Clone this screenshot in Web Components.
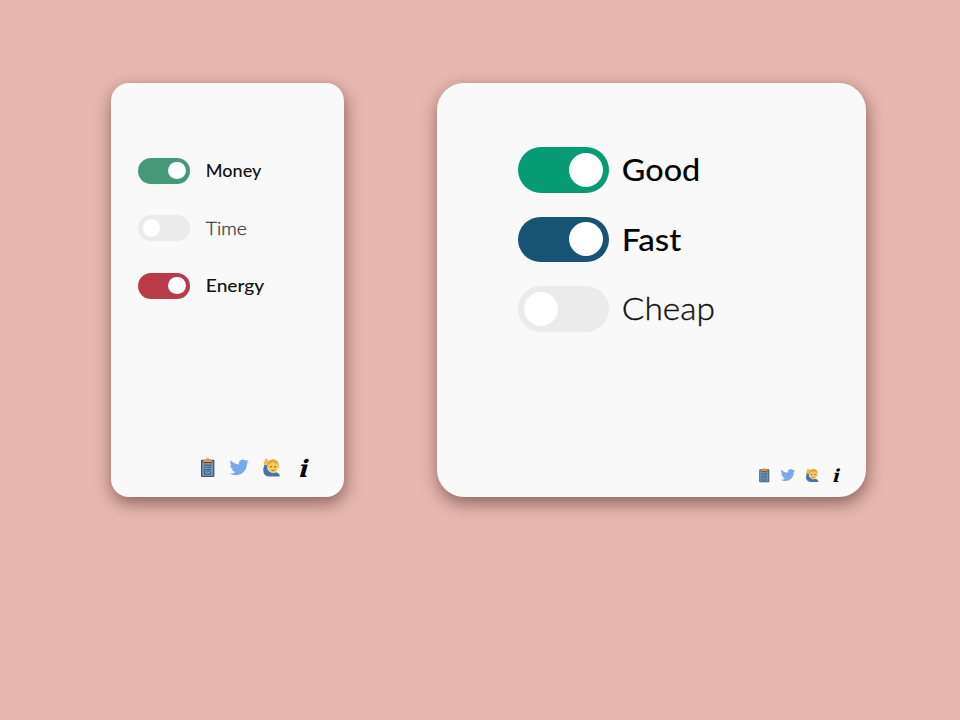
<!DOCTYPE html>
<html lang="en"><head><meta charset="utf-8"><title>Pick two</title>
<style>
body{margin:0;width:960px;height:720px;overflow:hidden;background:#e7b8b0;font-family:Lato,"Open Sans",sans-serif}
</style></head><body>
<trade-board></trade-board>
<script>
class ToggleOption extends HTMLElement{
 connectedCallback(){
  const root=this.attachShadow({mode:'open'}),on=this.hasAttribute('on'),ink=this.getAttribute('ink')||'#111';
  root.innerHTML=`<style>
  :host{display:flex;align-items:center;gap:var(--gap);height:var(--h)}
  .track{box-sizing:border-box;flex:none;width:var(--w);height:var(--h);border-radius:99px;background:${this.getAttribute('color')||'#ebebeb'};display:flex;align-items:center;justify-content:${on?'flex-end':'flex-start'};padding:0 var(--pad)}
  .knob{width:var(--knob);height:var(--knob);border-radius:50%;background:#fff}
  svg{display:block;overflow:visible;width:110px;height:var(--h)}
  text{font-size:var(--size);font-weight:${on?500:300};fill:${ink};stroke:${ink};stroke-width:${on?0:.35}px}
  </style><div class="track"><div class="knob"></div></div><svg><text x="-.2" y="${this.getAttribute('base')}" textLength="${this.getAttribute('len')}" lengthAdjust="spacingAndGlyphs">${this.textContent}</text></svg>`;
 }
}
class IconLinks extends HTMLElement{
 connectedCallback(){
  this.attachShadow({mode:'open'}).innerHTML=`<style>
  :host{display:flex;gap:var(--icon-gap)}
  svg{display:block;width:var(--icon);height:var(--icon);overflow:visible}
  text{font:italic bold 24px "DejaVu Serif",serif}
  </style>
  <svg viewBox="0 0 20 20"><rect x="3" y="1.8" width="13.4" height="17.2" rx="1" fill="#46535f"/><rect x="4.2" y="3.2" width="11" height="14.8" fill="#7097b8"/><path d="M5.4 4.4V3q0-1.3 1.7-1.3Q7.4.2 9.7.2t2.6 1.5Q14 1.7 14 3v1.4z" fill="#e5933d"/><path d="M5.5 4.5h8.4" stroke="#594b40"/><path d="M6 7.2h7.6M6 9.3h2.2m1.2 0h4M6.6 11.6v4.7h6.2v-2M6.6 11.6h5.8M8.5 13.8H10l3-2.5" fill="none" stroke="#3b566e" stroke-width=".9"/></svg>
  <svg viewBox="0 0 24 24"><path transform="translate(-.6 -.3) scale(.97)" fill="#7ba8e8" d="M23.95 4.57a10 10 0 01-2.82.77 4.96 4.96 0 002.16-2.72c-.95.55-2 .96-3.13 1.18a4.92 4.92 0 00-8.38 4.48C7.69 8.09 4.07 6.13 1.64 3.16a4.82 4.82 0 00-.67 2.48c0 1.71.87 3.21 2.19 4.1a4.9 4.9 0 01-2.23-.62v.06a4.92 4.92 0 003.95 4.83 5 5 0 01-2.21.08 4.94 4.94 0 004.6 3.42A9.87 9.87 0 010 19.54a13.99 13.99 0 007.56 2.21c9.05 0 14-7.5 14-13.98l-.02-.64a9.94 9.94 0 002.41-2.56z"/></svg>
  <svg viewBox="0 0 20 20"><path d="M2.4 6.5Q.6 11 1.6 14.8 3 18.5 7 18.6h10.8q.2-4.2-5.2-4.4Q6.8 14.6 5.5 11l.1-4z" fill="#4672b4"/><path d="M2 7 1.6 3.8q.3-.8 1 0L3 1.1q.6-.8 1 .2l.8-.6q.8.1.6 1.3.9-.3 1 .6.5 2.2-.8 5z" fill="#f4bd4b"/><path d="M5.7 9Q4.8 1.6 11 1.4q6.4.1 5.5 7.6z" fill="#d99a35"/><circle cx="5.9" cy="9" r="1.1" fill="#f3bb48"/><circle cx="16.3" cy="9" r="1.1" fill="#f3bb48"/><ellipse cx="11.1" cy="9" rx="5" ry="6.2" fill="#f8cb5a"/><path d="M6.2 6q3.2-.2 4.8-1.9Q12.6 6 16 6l-1-3.1-3.1-1.5-4.2 1z" fill="#e1a83b"/><circle cx="9" cy="8.8" r=".75" fill="#5b4123"/><circle cx="13.2" cy="8.8" r=".75" fill="#5b4123"/><path d="M9.4 12.2q1.8.9 3.4 0" fill="none" stroke="#9d6430" stroke-width=".9"/></svg>
  <svg viewBox="0 0 20 20"><text x="5.1" y="18.5" transform="translate(1.3 0) skewX(-4)" textLength="9.6" lengthAdjust="spacingAndGlyphs">i</text></svg>`;
 }
}
class OptionCard extends HTMLElement{
 connectedCallback(){
  this.attachShadow({mode:'open'}).innerHTML=`<style>
  :host{box-sizing:border-box;display:flex;flex-direction:column;justify-content:space-between;height:414.5px;background:#f9f9f9;box-shadow:1px 6px 17px rgba(50,15,10,.52)}
  .options{display:flex;flex-direction:column;gap:var(--row-gap)}
  .links{align-self:flex-end}
  </style><div class="options"><slot></slot></div><div class="links"><slot name="links"></slot></div>`;
 }
}
class TradeBoard extends HTMLElement{
 connectedCallback(){
  this.attachShadow({mode:'open'}).innerHTML=`<style>
  :host{display:flex;align-items:flex-start;gap:93.5px;padding:82.5px 0 0 111px}
  .narrow{width:232.5px;border-radius:18px;padding:75px 30px 19px 27px;--w:52px;--h:26px;--pad:4.5px;--knob:17.5px;--gap:16px;--size:18px;--row-gap:31.5px;--icon:20px;--icon-gap:12px}
  .wide{width:429px;border-radius:27px;padding:64.7px 22.5px 14.5px 81px;--w:91px;--h:45.5px;--pad:6px;--knob:34px;--gap:13px;--size:31.2px;--row-gap:24px;--icon:15px;--icon-gap:9px}
  </style>
  <option-card class="narrow"><toggle-option on color="#459979" len="55.5" base="19.2">Money</toggle-option><toggle-option len="41" base="19.5" ink="#444">Time</toggle-option><toggle-option on color="#ba3a47" len="58.5" base="19">Energy</toggle-option><icon-links slot="links"></icon-links></option-card>
  <option-card class="wide"><toggle-option on color="#059b75" ink="#000" len="78.5" base="34.3">Good</toggle-option><toggle-option on color="#175373" ink="#000" len="59.5" base="34">Fast</toggle-option><toggle-option len="93" base="34.3">Cheap</toggle-option><icon-links slot="links"></icon-links></option-card>`;
 }
}
customElements.define('toggle-option',ToggleOption);
customElements.define('icon-links',IconLinks);
customElements.define('option-card',OptionCard);
customElements.define('trade-board',TradeBoard);
</script></body></html>
